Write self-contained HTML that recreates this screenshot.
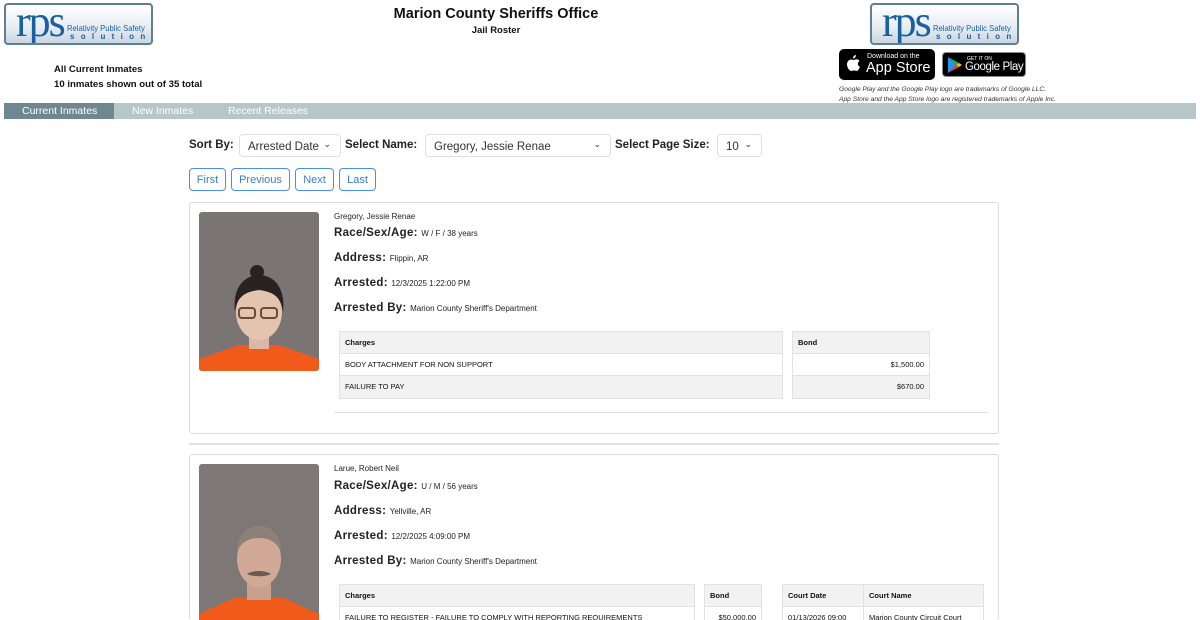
<!DOCTYPE html>
<html><head><meta charset="utf-8"><style>
*{box-sizing:border-box;margin:0;padding:0}
html,body{width:1200px;height:620px;overflow:hidden}
body{background:#fff;font-family:"Liberation Sans",sans-serif;color:#111;position:relative}
.a{position:absolute;white-space:nowrap}
.logo{width:149px;height:42px;border:2px solid #5f7f95;border-radius:4px;background:linear-gradient(#fff,#e6edf3 60%,#c9d6e0);overflow:hidden}
.logo .r{position:absolute;left:10px;top:-9px;font-family:"Liberation Serif",serif;font-size:44px;color:#1a5fa0;letter-spacing:-2px}
.logo .t1{position:absolute;left:61px;top:18px;font-size:8.5px;color:#1a5fa0;transform:scaleX(.9);transform-origin:left;white-space:nowrap}
.logo .t2{position:absolute;left:64px;top:27px;font-size:8px;color:#1a5fa0;letter-spacing:6.3px;font-weight:bold;white-space:nowrap}
.nav{left:4px;top:103px;width:1192px;height:16px;background:#b7c6c6;font-size:10.5px;color:#fff}
.nav span{position:absolute;top:2px}
.lbl{font-weight:bold;font-size:11.5px;color:#222}
.sel{border:1px solid #dde1e5;border-radius:4px;height:23px;font-size:11.5px;color:#333;padding:5px 8px}
.sel i{position:absolute;right:9px;top:4px;font-style:normal;font-size:9px}
.btn{top:168px;height:23px;border:1px solid #4a90e2;border-radius:4px;color:#3b7fd4;font-size:11px;text-align:center;line-height:23px}
.card{left:189px;width:810px;border:1px solid #dcdcdc;border-radius:3px}
.b{font-weight:bold;font-size:11.5px;color:#222;letter-spacing:.3px}
.s{font-size:8px;font-weight:normal;color:#222;letter-spacing:0}
.tbl{border:1px solid #e2e2e2;font-size:7.5px}
.tbl div{height:22px;line-height:22px;padding:0 5px;border-bottom:1px solid #e2e2e2;white-space:nowrap;overflow:hidden}
.h{background:#f2f2f2;font-weight:bold}
.g{background:#f2f2f2}
</style></head><body>
<div class="a logo" style="left:4px;top:3px"><span class="r">rps</span><span class="t1">Relativity Public Safety</span><span class="t2">solutions</span></div>
<div class="a logo" style="left:870px;top:3px"><span class="r">rps</span><span class="t1">Relativity Public Safety</span><span class="t2">solutions</span></div>
<div class="a" style="left:300px;width:392px;top:6px;text-align:center;font-weight:bold;font-size:14.5px">Marion County Sheriffs Office</div>
<div class="a" style="left:300px;width:392px;top:25px;text-align:center;font-weight:bold;font-size:9.5px">Jail Roster</div>
<div class="a" style="left:54px;top:62px;font-weight:bold;font-size:9.6px;line-height:15px">All Current Inmates<br>10 inmates shown out of 35 total</div>
<div class="a" style="left:839px;top:49px;width:96px;height:31px;background:#000;border-radius:5px;color:#fff">
<svg class="a" style="left:7px;top:6px" width="15" height="18" viewBox="0 0 15 18"><path d="M10 0c0 2-1.5 3.5-3 3.5 0-2 1.5-3.5 3-3.5zM7.5 5c1 0 2-.7 3-.7 1.3 0 2.5.8 3 1.8-2.5 1.300-2 4.800.5 5.700-.6 1.800-2 4.200-3.300 4.200-1 0-1.300-.6-2.600-.6s-1.700.6-2.700.6C3.500 16 1 12.500 1 9.500 1 6.500 3 4.500 5 4.500c1 0 1.800.5 2.500.5z" fill="#fff"/></svg>
<span class="a" style="left:28px;top:4px;font-size:7px">Download on the</span><span class="a" style="left:27px;top:11px;font-size:14.5px">App Store</span></div>
<div class="a" style="left:942px;top:52px;width:84px;height:25px;background:#000;border-radius:4px;border:1px solid #888;color:#fff">
<svg class="a" style="left:5px;top:4px" width="14" height="16" viewBox="0 0 14 16"><path d="M0 0l8 8-8 8z" fill="#2196f3"/><path d="M0 0l11 6-3 2z" fill="#34a853"/><path d="M0 16l11-6-3-2z" fill="#ea4335"/><path d="M11 6l3 2-3 2-3-2z" fill="#fbbc04"/></svg>
<span class="a" style="left:24px;top:3px;font-size:5px">GET IT ON</span><span class="a" style="left:22px;top:8px;font-size:11.5px;letter-spacing:-.4px">Google Play</span></div>
<div class="a" style="left:839px;top:85px;font-size:6.7px;font-style:italic;color:#333;line-height:10px">Google Play and the Google Play logo are trademarks of Google LLC.<br>App Store and the App Store logo are registered trademarks of Apple Inc.</div>
<div class="a nav"><div class="a" style="left:0;top:0;width:110px;height:16px;background:#6e8791"></div><span style="left:18px">Current Inmates</span><span style="left:128px">New Inmates</span><span style="left:224px">Recent Releases</span></div>

<div class="a lbl" style="left:189px;top:139px">Sort By:</div>
<div class="a sel" style="left:239px;top:134px;width:102px;padding-top:6px">Arrested Date<i>&#8964;</i></div>
<div class="a lbl" style="left:345px;top:139px">Select Name:</div>
<div class="a sel" style="left:425px;top:134px;width:186px;padding-top:6px">Gregory, Jessie Renae<i>&#8964;</i></div>
<div class="a lbl" style="left:615px;top:139px">Select Page Size:</div>
<div class="a sel" style="left:717px;top:134px;width:45px;padding-top:6px">10<i>&#8964;</i></div>
<div class="a btn" style="left:189px;width:37px">First</div>
<div class="a btn" style="left:231px;width:59px">Previous</div>
<div class="a btn" style="left:295px;width:39px">Next</div>
<div class="a btn" style="left:339px;width:37px">Last</div>

<div class="a card" style="top:202px;height:232px"></div>
<svg class="a" style="left:199px;top:212px;border-radius:3px" width="120" height="159"><rect width="120" height="159" fill="#7a7574"/><path d="M0 159l0-12 40-14h40l40 14v12z" fill="#f05a1a"/><rect x="50" y="115" width="20" height="22" fill="#d9b9a6"/><ellipse cx="60" cy="100" rx="23" ry="28" fill="#e2c4b0"/><path d="M36 100c-3-25 10-37 24-37s27 12 24 37c-2-14-8-20-24-22-16 2-22 8-24 22z" fill="#2a2220"/><circle cx="58" cy="60" r="7" fill="#2a2220"/><rect x="40" y="96" width="16" height="10" rx="3" fill="none" stroke="#6b4a3a" stroke-width="2"/><rect x="62" y="96" width="16" height="10" rx="3" fill="none" stroke="#6b4a3a" stroke-width="2"/></svg>
<div class="a s" style="left:334px;top:212px">Gregory, Jessie Renae</div>
<div class="a b" style="left:334px;top:227px">Race/Sex/Age: <span class="s">W / F / 38 years</span></div>
<div class="a b" style="left:334px;top:252px">Address: <span class="s">Flippin, AR</span></div>
<div class="a b" style="left:334px;top:277px">Arrested: <span class="s">12/3/2025 1:22:00 PM</span></div>
<div class="a b" style="left:334px;top:302px">Arrested By: <span class="s">Marion County Sheriff's Department</span></div>
<div class="a tbl" style="left:339px;top:331px;width:444px"><div class="h">Charges</div><div>BODY ATTACHMENT FOR NON SUPPORT</div><div class="g" style="border:0">FAILURE TO PAY</div></div>
<div class="a tbl" style="left:792px;top:331px;width:138px"><div class="h">Bond</div><div style="text-align:right">$1,500.00</div><div class="g" style="text-align:right;border:0">$670.00</div></div>
<div class="a" style="left:334px;top:412px;width:654px;height:1px;background:#e2e2e2"></div>
<div class="a" style="left:189px;top:443px;width:810px;height:2px;background:#e2e2e2"></div>

<div class="a card" style="top:454px;height:166px;border-bottom:0"></div>
<svg class="a" style="left:199px;top:464px;border-radius:3px 3px 0 0" width="120" height="156"><rect width="120" height="156" fill="#7d7775"/><path d="M0 156l0-6 35-16h50l35 16v6z" fill="#f05a1a"/><rect x="48" y="112" width="24" height="24" fill="#c9a08c"/><ellipse cx="60" cy="95" rx="22" ry="28" fill="#d2a996"/><path d="M38 88c0-18 10-26 22-26s22 8 22 26c-4-10-12-14-22-14s-18 4-22 14z" fill="#8d8078"/><path d="M48 110c6-4 18-4 24 0-6 3-18 3-24 0z" fill="#6b5a50"/></svg>
<div class="a s" style="left:334px;top:464px">Larue, Robert Neil</div>
<div class="a b" style="left:334px;top:480px">Race/Sex/Age: <span class="s">U / M / 56 years</span></div>
<div class="a b" style="left:334px;top:505px">Address: <span class="s">Yellville, AR</span></div>
<div class="a b" style="left:334px;top:530px">Arrested: <span class="s">12/2/2025 4:09:00 PM</span></div>
<div class="a b" style="left:334px;top:555px">Arrested By: <span class="s">Marion County Sheriff's Department</span></div>
<div class="a tbl" style="left:339px;top:584px;width:356px;height:36px;border-bottom:0"><div class="h">Charges</div><div>FAILURE TO REGISTER - FAILURE TO COMPLY WITH REPORTING REQUIREMENTS</div></div>
<div class="a tbl" style="left:704px;top:584px;width:58px;height:36px;border-bottom:0"><div class="h">Bond</div><div style="text-align:right">$50,000.00</div></div>
<div class="a tbl" style="left:782px;top:584px;width:202px;height:36px;border-bottom:0;display:grid;grid-template-columns:81px 119px"><div class="h" style="border-right:1px solid #e2e2e2">Court Date</div><div class="h">Court Name</div><div style="border-right:1px solid #e2e2e2">01/13/2026 09:00</div><div>Marion County Circuit Court</div></div>
</body></html>
